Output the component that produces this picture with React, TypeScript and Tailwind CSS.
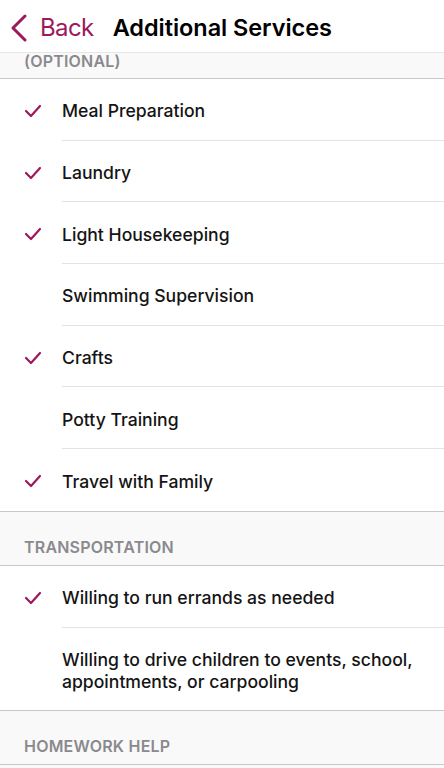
interface Row {
  label: string;
  checked: boolean;
}

const optional: Row[] = [
  { label: "Meal Preparation", checked: true },
  { label: "Laundry", checked: true },
  { label: "Light Housekeeping", checked: true },
  { label: "Swimming Supervision", checked: false },
  { label: "Crafts", checked: true },
  { label: "Potty Training", checked: false },
  { label: "Travel with Family", checked: true },
];

const transport: Row[] = [
  { label: "Willing to run errands as needed", checked: true },
  { label: "Willing to drive children to events, school, appointments, or carpooling", checked: false },
];

function Check() {
  return (
    <svg viewBox="0 0 18 14" className="w-[18px] h-[14px]" fill="none" stroke="#9c1a5b" strokeWidth="2.2" strokeLinecap="round" strokeLinejoin="round">
      <path d="M2 7 L7 12 L16 2" />
    </svg>
  );
}

function ListRow({ row, last }: { row: Row; last: boolean }) {
  return (
    <div className="flex items-stretch bg-white">
      <div className="w-[62px] shrink-0 flex items-center pl-[24px] pt-[2px]">
        {row.checked && <Check />}
      </div>
      <div className={`flex-1 flex items-center min-h-[61.7px] pt-[21px] pb-[17px] pr-[20px] text-[17.6px] leading-[22px] font-medium text-[#141414] ${last ? "" : "border-b border-[#e3e3e3]"}`}>
        {row.label}
      </div>
    </div>
  );
}

function Section({ title, rows, cut }: { title: string; rows?: Row[]; cut?: boolean }) {
  return (
    <div>
      <div className={`bg-[#f9f9f9] px-[24px] border-b border-[#c8c8c8] ${cut ? "h-[26px]" : "pt-[24px] pb-[7px]"}`}>
        <div className={`text-[16px] font-semibold tracking-[0.2px] text-[#8a8a8e] uppercase ${cut ? "leading-[16px]" : "leading-[22px]"}`}>
          {title}
        </div>
      </div>
      {rows && (
        <div className="border-b border-[#c8c8c8]">
          {rows.map((r, i) => (
            <ListRow key={r.label} row={r} last={i === rows.length - 1} />
          ))}
        </div>
      )}
    </div>
  );
}

export default function App() {
  return (
    <div className="w-[444px] h-[768px] overflow-hidden bg-[#f9f9f9] font-['Inter',sans-serif]">
      {/* Nav bar */}
      <div className="h-[53px] bg-white border-b border-[#e6e6e6] flex items-center pt-[3px]">
        <div className="flex items-center text-[#9c1a5b] pl-[11px]">
          <svg viewBox="0 0 16 28" className="w-[16px] h-[28px]" fill="none" stroke="currentColor" strokeWidth="3" strokeLinecap="round" strokeLinejoin="round">
            <path d="M14 2 L2 14 L14 26" />
          </svg>
          <span className="text-[24px] leading-[30px] tracking-[-0.6px] ml-[13px]">Back</span>
        </div>
        <div className="ml-[19px] text-[23.5px] leading-[30px] font-semibold text-black tracking-[-0.05px]">Additional Services</div>
      </div>

      <Section title="(Optional)" rows={optional} cut />
      <Section title="Transportation" rows={transport} />
      <Section title="Homework Help" />
    </div>
  );
}
